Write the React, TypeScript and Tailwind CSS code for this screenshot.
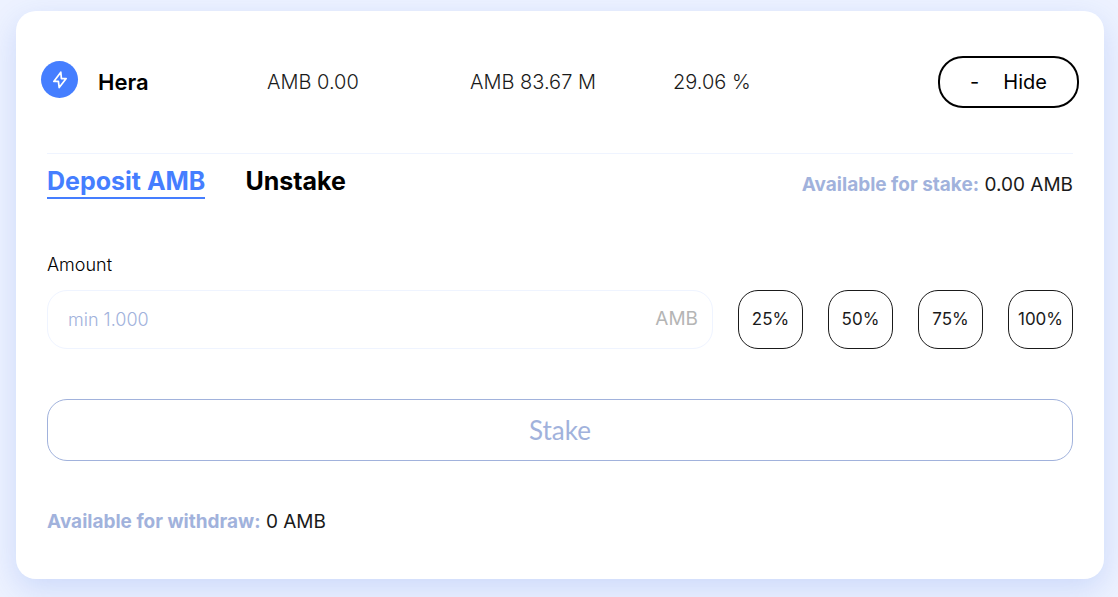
import { useState } from "react";

const percents = ["25%", "50%", "75%", "100%"];

function PoolHeader() {
  return (
    <header className="grid grid-cols-[226px_1fr_1fr_2fr] items-center px-[25px] text-xl font-light text-[#1a1a1a]">
      <div className="flex items-start gap-5">
        <span className="flex size-[37px] items-center justify-center rounded-full bg-[#457eff]">
          <svg
            viewBox="0 0 16 18"
            className="h-[18px] w-4"
            fill="none"
            stroke="white"
            strokeWidth="1.7"
            strokeLinejoin="round"
            aria-hidden="true"
          >
            <path d="M8.8 1.2 1.8 10.4h4.6L7.2 16.6 14.2 7.6H9.4Z" />
          </svg>
        </span>
        <h1 className="text-[22px] leading-[42px] font-semibold text-black">Hera</h1>
      </div>
      <span>AMB 0.00</span>
      <span>AMB 83.67 M</span>
      <div className="flex items-center justify-between">
        <span>29.06 %</span>
        <button
          type="button"
          className="flex h-[52px] w-[141px] items-center justify-center gap-6 rounded-[25px] border-2 border-black font-normal text-black"
        >
          <span>-</span>
          <span>Hide</span>
        </button>
      </div>
    </header>
  );
}

export default function App() {
  const [amount, setAmount] = useState("");

  return (
    <main className="min-h-screen bg-[#edf2ff] pt-[11px] pr-3.5 pb-[18px] pl-4 font-['Inter','Liberation_Sans',sans-serif] text-black">
      <section className="rounded-[20px] bg-white pt-[45px] pb-[43px] shadow-[0_10px_30px_rgba(55,105,225,0.18)]">
        <PoolHeader />

        <div className="mx-[31px] mt-[45px] border-t border-[#eff4ff] pt-[11px]">
          <div className="flex items-start justify-between">
            <nav className="flex gap-10 text-[25px] leading-8 font-bold">
              <button type="button" className="border-b-2 border-[#457eff] text-[#457eff]">
                Deposit AMB
              </button>
              <button type="button" className="border-b-2 border-transparent">
                Unstake
              </button>
            </nav>
            <p className="pt-1.5 text-[19px] leading-7 text-[#1a1a1a]">
              <span className="font-bold text-[#a1b2dc]">Available for stake:</span> 0.00 AMB
            </p>
          </div>

          <label htmlFor="amount" className="mt-[52px] block text-lg leading-7 font-light">
            Amount
          </label>

          <div className="mt-[11px] flex gap-[25px]">
            <div className="flex h-[59px] flex-1 items-center rounded-[20px] border border-[#eff4ff] pr-3.5 pl-5">
              <input
                id="amount"
                type="text"
                inputMode="decimal"
                placeholder="min 1.000"
                value={amount}
                onChange={(e) => setAmount(e.target.value)}
                className="min-w-0 flex-1 text-lg font-light outline-none placeholder:text-[#a1b2dc]"
              />
              <span className="text-[19px] text-[#b5b5b5]">AMB</span>
            </div>
            {percents.map((percent) => (
              <button
                key={percent}
                type="button"
                className="h-[59px] w-[65px] rounded-[20px] border border-[#1a1a1a] text-[17px] text-[#1a1a1a]"
              >
                {percent}
              </button>
            ))}
          </div>

          <button
            type="button"
            className="mt-[50px] h-[62px] w-full rounded-[20px] border border-[#a1b2dc] font-['Lato','Liberation_Sans',sans-serif] text-[26px] text-[#a1b2dc]"
          >
            Stake
          </button>

          <p className="mt-[47px] text-[19px] leading-7 text-[#1a1a1a]">
            <span className="font-bold text-[#a1b2dc]">Available for withdraw:</span> 0 AMB
          </p>
        </div>
      </section>
    </main>
  );
}
